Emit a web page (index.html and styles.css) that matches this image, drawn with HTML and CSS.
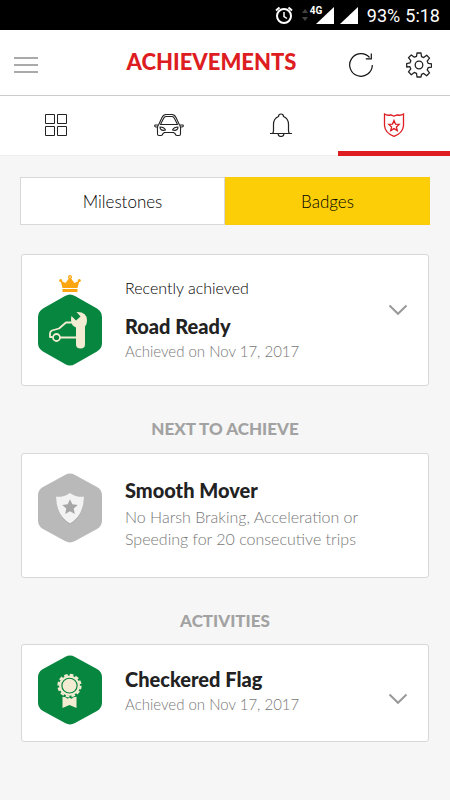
FILE: index.html
```html
<!DOCTYPE html>
<html lang="en">
<head>
    <meta charset="UTF-8">
    <meta name="viewport" content="width=device-width, initial-scale=1.0">
    <title>Achievements</title>
    <link rel="stylesheet" href="styles.css">
</head>
<body>
    <div class="status-bar">
        <svg class="alarm" width="18" height="18" viewBox="0 0 18 18" fill="none" stroke="#fff" stroke-width="2">
            <circle cx="9" cy="10" r="7"/>
            <path d="M9 6v4.500l3 2" stroke-width="1.500"/>
            <path d="M1 4.500L4.500 1.500M17 4.500L13.500 1.500"/>
        </svg>
        <svg class="data" width="6" height="12" viewBox="0 0 6 12" fill="#444">
            <path d="M3 0l3 4H0zM3 12l3-4H0z"/>
        </svg>
        <span class="signal">
            <span class="network">4G</span>
            <svg width="18" height="17" viewBox="0 0 18 17"><path d="M18 0v17H0z" fill="#fff"/></svg>
        </span>
        <svg class="signal-two" width="18" height="17" viewBox="0 0 18 17"><path d="M18 0v17H0z" fill="#fff"/></svg>
        <span class="battery">93%</span>
        <span class="clock">5:18</span>
    </div>

    <header class="header">
        <button type="button" class="icon-button" aria-label="Menu">
            <svg width="24" height="16" viewBox="0 0 24 16" fill="#aaa">
                <path d="M0 0h24v2H0zM0 7h24v2H0zM0 14h24v2H0z"/>
            </svg>
        </button>
        <h1>ACHIEVEMENTS</h1>
        <div class="header-actions">
            <button type="button" class="icon-button" aria-label="Refresh">
                <svg width="24" height="26" viewBox="0 0 24 26" fill="none" stroke="#111" stroke-width="1.200">
                    <path d="M23.300 13a11.300 11.300 0 1 1-2.800-7.500"/>
                    <path d="M22.300 1.500v5.300h-5.500"/>
                </svg>
            </button>
            <button type="button" class="icon-button" aria-label="Settings">
                <svg width="26" height="26" viewBox="0 0 26 26" fill="none" stroke="#222" stroke-width="1.300" stroke-linejoin="round">
                    <path d="M11 1h4l.5 3.700 2.200.9 3-2.300 2.800 2.800-2.300 3 .9 2.200 3.400.5v3.400l-3.400.5-.9 2.200 2.300 3-2.800 2.800-3-2.300-2.200.9L15 25h-4l-.5-3.700-2.200-.9-3 2.300-2.800-2.800 2.300-3-.9-2.200L.700 15v-3.400l3.200-.7.9-2.200-2.300-3 2.800-2.800 3 2.300 2.200-.9z"/>
                    <circle cx="13" cy="13" r="3.800"/>
                </svg>
            </button>
        </div>
    </header>

    <nav class="tabs">
        <a href="#dashboard" class="tab" aria-label="Dashboard">
            <svg width="24" height="24" viewBox="0 0 24 24" fill="none" stroke="#222">
                <path d="M1.500 1.500h9v9h-9zM13.500 1.500h9v9h-9zM1.500 13.500h9v9h-9zM13.500 13.500h9v9h-9z"/>
            </svg>
        </a>
        <a href="#car" class="tab" aria-label="Car">
            <svg width="30" height="24" viewBox="0 0 30 24" fill="none" stroke="#222" stroke-width="1.100" stroke-linejoin="round">
                <path d="M4.500 12L8 4.500Q9.500 1.500 12 1.500h6q2.500 0 4 3L25.500 12"/>
                <path d="M6.500 11.500L9.500 5.500Q10.500 3.500 12 3.500h6q1.500 0 2.500 2l3 6z"/>
                <path d="M4.500 12H1q-1 1.500 1 2h1.500M25.500 12H29q1 1.500-1 2h-1.500M4.500 12Q3 14 3.500 17v4q0 1.500 1.500 1.500h2q1.500 0 2-2l1.500-1h9l1.500 1q.5 2 2 2h2q1.500 0 1.500-1.500v-4q.5-3-1-5"/>
                <path d="M6 14q4 0 5.500 3-3 1-4.500-.5Q6 16 6 14zM24 14q-4 0-5.500 3 3 1 4.500-.5 1-.5 1-2.500z"/>
            </svg>
        </a>
        <a href="#alerts" class="tab" aria-label="Alerts">
            <svg width="24" height="24" viewBox="0 0 24 24" fill="none" stroke="#222" stroke-width="1.200">
                <path d="M1 20.500h22M3.500 20.500q1-1 1-3v-6q0-6 5-8 0-2.500 2.500-2.500t2.500 2.500q5 2 5 8v6q0 2 1 3M9 20.500q0 3 3 3t3-3"/>
            </svg>
        </a>
        <a href="#achievements" class="tab active" aria-label="Achievements" aria-current="page">
            <svg width="22" height="24" viewBox="0 0 22 24" fill="none" stroke="#dd1d21" stroke-width="1.300">
                <path d="M1.500 1q3 2 6 .8L11 3l3.500-1.200q3 1.200 6-.8v11.500Q20 20 11 23.300 2 20 1.500 12.500z"/>
                <path d="M11 7.500l1.500 3.600 3.700.3-2.800 2.500.9 3.700-3.300-2-3.300 2 .9-3.700-2.800-2.500 3.700-.3z"/>
            </svg>
        </a>
    </nav>

    <main>
        <div class="switcher">
            <button type="button">Milestones</button>
            <button type="button" class="selected">Badges</button>
        </div>

        <section class="card recent">
            <div class="badge">
                <svg class="crown" width="22" height="17" viewBox="0 0 22 17" fill="#fba610">
                    <path d="M3.500 13L1.500 5.500l5 2.500L11 2l4.500 6 5-2.500-2 7.500z"/>
                    <path d="M3.500 14h15v3h-15z"/>
                    <circle cx="1.700" cy="5.500" r="1.500"/>
                    <circle cx="11" cy="2" r="2"/>
                    <circle cx="20.300" cy="5.500" r="1.500"/>
                    <circle cx="11" cy="2" r=".7" fill="#fff"/>
                </svg>
                <svg width="64" height="72" viewBox="0 0 64 72">
                    <path d="M27 2Q32-1 37 2L59 14.500Q64 17.500 64 23V49Q64 54.500 59 57.500L37 70Q32 73 27 70L5 57.500Q0 54.500 0 49V23Q0 17.500 5 14.500z" fill="#078640"/>
                    <g fill="none" stroke="#f4ecd2" stroke-width="1.800" stroke-linejoin="round">
                        <path d="M34 28.500h-6L21 34.500l-7 2q-2 1-2 3v3.500h2.500M22 43.500h16"/>
                        <circle cx="18.500" cy="43.500" r="3.500"/>
                    </g>
                    <path d="M38.500 18q10.500-.5 10.500 8.500 0 4-2 6v18q0 4-4.500 4t-4.500-4V33.500q-5-2-5-8 0-2 .5-3.500l4.500 4.500 4.500-4z" fill="#f4ecd2"/>
                </svg>
            </div>
            <div class="info">
                <p class="label">Recently achieved</p>
                <h3>Road Ready</h3>
                <p class="date">Achieved on Nov 17, 2017</p>
            </div>
            <button type="button" class="icon-button expand" aria-label="Show Road Ready">
                <svg width="20" height="12" viewBox="0 0 20 12" fill="none" stroke="#999" stroke-width="2">
                    <path d="M1.500 1.500L10 9.800l8.500-8.300"/>
                </svg>
            </button>
        </section>

        <h2>NEXT TO ACHIEVE</h2>
        <section class="card next">
            <div class="badge">
                <svg width="64" height="70" viewBox="0 0 64 72" preserveAspectRatio="none">
                    <path d="M27 2Q32-1 37 2L59 14.500Q64 17.500 64 23V49Q64 54.500 59 57.500L37 70Q32 73 27 70L5 57.500Q0 54.500 0 49V23Q0 17.500 5 14.500z" fill="#b9b9b9"/>
                    <path d="M32 21.500q6 4.500 14 4-.2 19-14 27.500-13.800-8.500-14-27.500 8 .5 14-4z" fill="#a4a4a4"/>
                    <path d="M32 20.500q6 4.500 14 4-.2 19-14 27.500-13.800-8.500-14-27.500 8 .5 14-4z" fill="#f2f2f2"/>
                    <path d="M32 27l2.300 5.200 5.500.6-4.100 3.800 1.100 5.500-4.800-2.800-4.800 2.800 1.100-5.500-4.100-3.800 5.500-.6z" fill="#a6a6a6"/>
                </svg>
            </div>
            <div class="info">
                <h3>Smooth Mover</h3>
                <p class="description">No Harsh Braking, Acceleration or Speeding for 20 consecutive trips</p>
            </div>
        </section>

        <h2>ACTIVITIES</h2>
        <section class="card activity">
            <div class="badge">
                <svg width="64" height="70" viewBox="0 0 64 72" preserveAspectRatio="none">
                    <path d="M27 2Q32-1 37 2L59 14.500Q64 17.500 64 23V49Q64 54.500 59 57.500L37 70Q32 73 27 70L5 57.500Q0 54.500 0 49V23Q0 17.500 5 14.500z" fill="#078640"/>
                    <circle cx="31.500" cy="31.500" r="10.500" fill="#f4ecd2"/>
                    <circle cx="31.500" cy="31.500" r="11" fill="none" stroke="#f4ecd2" stroke-width="2.200" stroke-dasharray="3.600 2.160"/>
                    <circle cx="31.500" cy="31.500" r="7.600" fill="none" stroke="#078640" stroke-width="1.200"/>
                    <path d="M24.500 43l3 .5 2 1.500 2-1 2 1 2-1.500 3-.5v11.500l-7-3-7 3z" fill="#f4ecd2"/>
                </svg>
            </div>
            <div class="info">
                <h3>Checkered Flag</h3>
                <p class="date">Achieved on Nov 17, 2017</p>
            </div>
            <button type="button" class="icon-button expand" aria-label="Show Checkered Flag">
                <svg width="20" height="12" viewBox="0 0 20 12" fill="none" stroke="#999" stroke-width="2">
                    <path d="M1.500 1.500L10 9.800l8.500-8.300"/>
                </svg>
            </button>
        </section>
    </main>
</body>
</html>
```
FILE: styles.css
```css
* {
    box-sizing: border-box;
}
body {
    margin: 0;
    min-height: 100vh;
    background-color: #f6f6f6;
    font-family: Lato, "Liberation Sans", sans-serif;
    font-size: 16px;
    color: #222;
}
h1, h2, h3, p {
    margin: 0;
}
svg {
    display: block;
}
.status-bar {
    display: flex;
    justify-content: flex-end;
    align-items: center;
    height: 30px;
    padding-right: 10px;
    background-color: #000;
    color: #fff;
    font-family: Roboto, sans-serif;
    font-size: 18px;
}
.data {
    margin: 0 8px 0 9px;
}
.signal {
    position: relative;
}
.network {
    position: absolute;
    top: -2px;
    left: -6px;
    font-size: 10px;
    line-height: 12px;
    font-weight: bold;
}
.signal-two {
    margin: 0 9px 0 6px;
}
.clock {
    margin-left: 5px;
}
.header {
    display: grid;
    grid-template-columns: 83px 1fr 83px;
    align-items: center;
    height: 66px;
    padding: 4px 18px 0 14px;
    background-color: #fff;
    border-bottom: 1px solid #ccc;
}
h1 {
    padding-right: 23px;
    line-height: 28px;
    margin-bottom: 6px;
    text-align: center;
    color: #dd1d21;
    font-size: 22px;
    font-weight: 900;
}
.header-actions {
    display: flex;
    justify-content: space-between;
}
.icon-button {
    padding: 0;
    border: none;
    background: none;
    cursor: pointer;
}
.tabs {
    display: flex;
    height: 60px;
    background-color: #fff;
    border-bottom: 1px solid #eee;
}
.tab {
    flex: 1;
    display: flex;
    justify-content: center;
    height: 60px;
    padding-top: 17px;
}
.tab.active {
    border-bottom: 5px solid #dd1d21;
}
main {
    padding: 21px 20px;
}
.switcher {
    display: flex;
    height: 48px;
    margin-bottom: 29px;
}
.switcher button {
    flex: 1;
    border: 1px solid #d8d8d8;
    background-color: #fff;
    color: #000;
    font-family: inherit;
    font-size: 17px;
    font-weight: 300;
    cursor: pointer;
}
.switcher .selected {
    border-color: #f8cc0c;
    background-color: #fbce07;
}
.card {
    display: flex;
    align-items: center;
    margin: 0 1px;
    padding: 0 20px 0 16px;
    background-color: #fff;
    border: 1px solid #d8d8d8;
    border-radius: 3px;
}
.recent {
    min-height: 132px;
}
.next {
    min-height: 125px;
    padding-bottom: 5px;
}
.activity {
    min-height: 98px;
    padding-bottom: 4px;
}
.badge {
    flex: none;
    margin-right: 23px;
}
.next .badge {
    align-self: flex-start;
    margin-top: 19px;
}
.activity .badge {
    align-self: flex-start;
    margin-top: 10px;
}
.crown {
    margin: 0 auto 2px;
}
.info {
    flex: 1;
}
.label {
    margin-bottom: 14px;
    line-height: 22px;
    color: #000;
    font-weight: 300;
}
h3 {
    line-height: 26px;
    font-size: 20px;
    font-weight: 900;
}
.date {
    line-height: 24px;
    color: #777;
    font-size: 15px;
    font-weight: 300;
}
.description {
    max-width: 250px;
    margin-top: 3px;
    line-height: 22px;
    color: #777;
    font-weight: 300;
}
.recent .expand {
    margin-bottom: 20px;
}
.activity .expand {
    margin-top: 16px;
}
h2 {
    margin: 30px 0 11px;
    line-height: 26px;
    text-align: center;
    color: #a2a2a2;
    font-size: 17px;
    font-weight: 900;
}
.next + h2 {
    margin-bottom: 10px;
}
```
